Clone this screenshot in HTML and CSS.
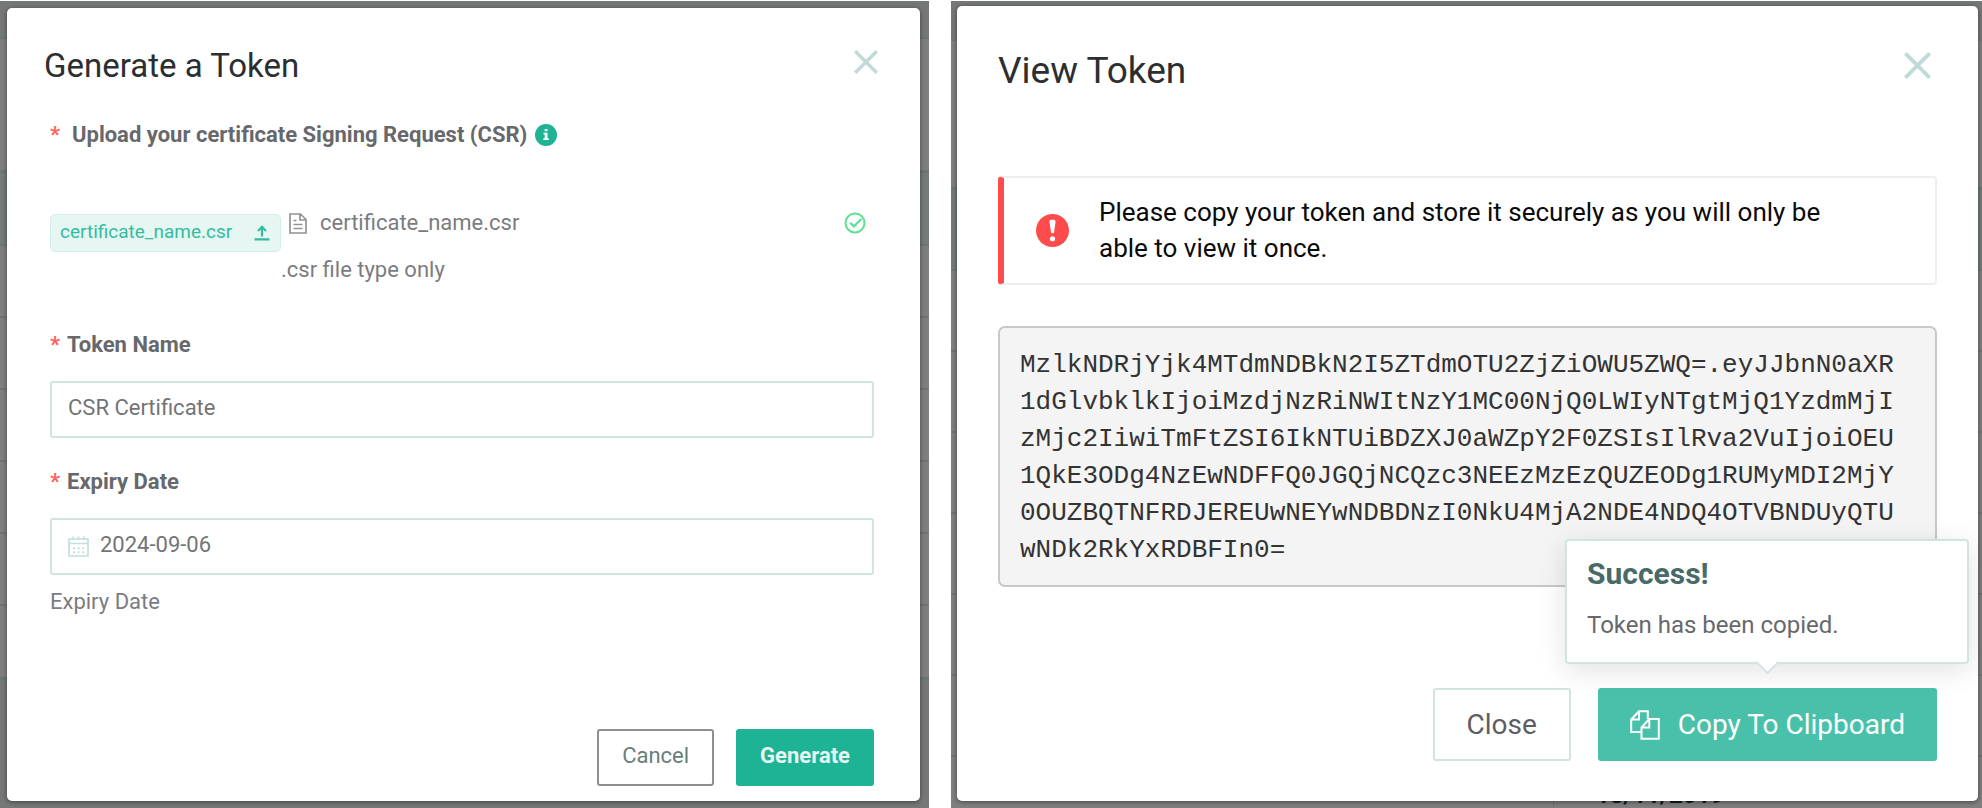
FILE: index.html
```html
<!DOCTYPE html>
<html lang="en">
<head>
<meta charset="utf-8">
<title>Generate a Token</title>
<link rel="stylesheet" href="styles.css">
</head>
<body>
<main class="screens">
  <section class="screen screen-generate">
    <div class="backdrop backdrop-generate" aria-hidden="true">
      <div class="row row-top"></div>
      <div class="row row-head"></div>
      <div class="row row-tint"></div>
      <div class="row"></div>
      <div class="row"></div>
      <div class="row"></div>
      <div class="row"></div>
      <div class="row"></div>
      <div class="row row-last"></div>
      <div class="row row-end"></div>
    </div>
    <form class="modal modal-generate" role="dialog" aria-labelledby="generate-title">
      <header class="modal-header">
        <h1 class="modal-title" id="generate-title">Generate a Token</h1>
        <button class="close-button" type="button" aria-label="Close dialog">
          <svg class="icon-close" viewBox="0 0 24 24"><path d="M1.2 1.2 22.8 22.8M22.8 1.2 1.2 22.8" fill="none" stroke="currentColor" stroke-width="3.4"/></svg>
        </button>
      </header>
      <div class="form">
        <p class="label label-upload"><span class="required">*</span><span>Upload your certificate Signing Request (CSR)</span>
          <svg class="icon-info" viewBox="0 0 22 22"><circle cx="11" cy="11" r="11" fill="#1db394"/><path d="M9.7 5h2.8v2.3H9.7zM8.5 8.8h4v5.4h1.3V16H8.3v-1.8h1.4v-3.6H8.5z" fill="#fff"/></svg>
        </p>
        <div class="upload">
          <button class="upload-button" type="button">
            <span>certificate_name.csr</span>
            <svg class="icon-upload" viewBox="0 0 16 16"><path d="M8 12V3M4 6.400 8 2.300l4 4.100M.5 14.800h15" fill="none" stroke="currentColor" stroke-width="2.200"/></svg>
          </button>
          <div class="upload-info">
            <div class="file">
              <svg class="icon-file" viewBox="0 0 18 21"><path d="M1 1h10.500L17 6.500V20H1zM11 1v6h6M4.500 11.500h9M4.500 15.500h9M4.500 7.500h3" fill="none" stroke="currentColor" stroke-width="1.700"/></svg>
              <span class="file-name">certificate_name.csr</span>
              <svg class="icon-check" viewBox="0 0 22 22"><circle cx="11" cy="11" r="9.500" fill="none" stroke="#5be094" stroke-width="2"/><path d="m6.200 10.800 3.600 3.600L17.400 7" fill="none" stroke="#5be094" stroke-width="2.200"/></svg>
            </div>
            <p class="hint">.csr file type only</p>
          </div>
        </div>
        <div class="field">
          <label class="label" for="token-name"><span class="required">*</span>Token Name</label>
          <div class="control"><input class="input" id="token-name" type="text" value="CSR Certificate"></div>
        </div>
        <div class="field">
          <label class="label" for="expiry-date"><span class="required">*</span>Expiry Date</label>
          <div class="control">
            <svg class="icon-calendar" viewBox="0 0 21 21"><path d="M1 3h19v17H1zM1 7.500h19M5 .5V4M10.500 .5V4M16 .5V4" fill="none" stroke="currentColor" stroke-width="1.700"/><path d="M5 12.200h11.500M5 16.200h11.500" fill="none" stroke="currentColor" stroke-width="2" stroke-dasharray="2 2.600"/></svg>
            <input class="input" id="expiry-date" type="text" value="2024-09-06">
          </div>
          <p class="hint hint-date">Expiry Date</p>
        </div>
      </div>
      <footer class="modal-footer">
        <button class="button button-cancel" type="button">Cancel</button>
        <button class="button button-generate" type="submit">Generate</button>
      </footer>
    </form>
  </section>

  <section class="screen screen-view">
    <div class="backdrop backdrop-view" aria-hidden="true">
      <div class="row row-top"></div>
      <div class="row row-head"></div>
      <div class="row row-tint"></div>
      <div class="row"></div>
      <div class="row"></div>
      <div class="row"></div>
      <div class="row"></div>
      <div class="row"></div>
      <div class="row"></div>
      <div class="row row-date"><span class="cell">18/11/2019</span></div>
    </div>
    <div class="modal modal-view" role="dialog" aria-labelledby="view-title">
      <header class="modal-header">
        <h1 class="modal-title" id="view-title">View Token</h1>
        <button class="close-button" type="button" aria-label="Close dialog">
          <svg class="icon-close" viewBox="0 0 24 24"><path d="M1.200 1.200 22.800 22.800M22.800 1.200 1.200 22.800" fill="none" stroke="currentColor" stroke-width="3.400"/></svg>
        </button>
      </header>
      <div class="alert" role="alert">
        <svg class="icon-alert" viewBox="0 0 32 32"><circle cx="16" cy="16" r="16" fill="#ff4b4b"/><path d="M13 7.500C13 5.700 14.300 5.500 16 5.500s3 .2 3 2l-1.500 10c-.2 1.700-2.800 1.700-3 0z" fill="#fff"/><circle cx="16" cy="24" r="2.500" fill="#fff"/></svg>
        <p class="alert-text">Please copy your token and store it securely as you will only be able to view it once.</p>
      </div>
      <div class="token">
        <code class="token-line">MzlkNDRjYjk4MTdmNDBkN2I5ZTdmOTU2ZjZiOWU5ZWQ=.eyJJbnN0aXR</code>
        <code class="token-line">1dGlvbklkIjoiMzdjNzRiNWItNzY1MC00NjQ0LWIyNTgtMjQ1YzdmMjI</code>
        <code class="token-line">zMjc2IiwiTmFtZSI6IkNTUiBDZXJ0aWZpY2F0ZSIsIlRva2VuIjoiOEU</code>
        <code class="token-line">1QkE3ODg4NzEwNDFFQ0JGQjNCQzc3NEEzMzEzQUZEODg1RUMyMDI2MjY</code>
        <code class="token-line">0OUZBQTNFRDJEREUwNEYwNDBDNzI0NkU4MjA2NDE4NDQ4OTVBNDUyQTU</code>
        <code class="token-line">wNDk2RkYxRDBFIn0=</code>
      </div>
      <footer class="modal-footer">
        <button class="button button-close" type="button">Close</button>
        <div class="copy">
          <button class="button button-copy" type="button">
            <svg class="icon-copy" viewBox="0 0 30 30"><path d="M11.500 22H1.200V9.500L9 1.200h8.800V9M9 1.200v8.300H1.200M11.500 28.800V17.500L19.300 9H28.800v19.800zM19.300 9v8.500h-7.800" fill="none" stroke="currentColor" stroke-width="2"/></svg>
            <span>Copy To Clipboard</span>
          </button>
          <div class="popover" role="status">
            <h2 class="popover-title">Success!</h2>
            <p class="popover-text">Token has been copied.</p>
          </div>
        </div>
      </footer>
    </div>
  </section>
</main>
</body>
</html>
```
FILE: styles.css
```css
* { box-sizing: border-box; }

body {
  margin: 0;
  background: #fff;
  font-family: Roboto, "Liberation Sans", sans-serif;
}

h1, h2, p { margin: 0; }

button, input { font: inherit; }

svg { display: block; flex: none; }

.screens {
  display: grid;
  grid-template-columns: minmax(0, 929fr) minmax(0, 1031fr);
  gap: 22px;
  min-height: 100vh;
  padding-top: 1px;
}

.screen {
  position: relative;
  display: flex;
}

.screen-generate { padding: 7px 9px 7px 7px; }
.screen-view { padding: 5px 4px 7px 6px; }

/* Dimmed table behind each dialog */
.backdrop {
  position: absolute;
  inset: 0;
  display: grid;
  overflow: hidden;
  background: #7f7f7f;
}

.backdrop-generate { grid-template-rows: 38px 134px 73px repeat(5, 72px) 74px 1fr; }
.backdrop-view { grid-template-rows: 40px 149px 81px repeat(6, 81px) 1fr; }

.row { border-bottom: 2px solid #6c7675; }
.row-top, .row-end { background: #767777; }
.row-head, .row-last { border-bottom-width: 3px; }
.row-tint { background: #737b7b; }
.row-end, .row-date { border-bottom: 0; }
.row-date { padding-left: 602px; }

.cell {
  display: block;
  padding-left: 42px;
  border-left: 1px solid #6c7675;
  color: #0d1c19;
  font-size: 24px;
  font-weight: 700;
  line-height: 76px;
}

.modal {
  position: relative;
  display: flex;
  flex: 1;
  flex-direction: column;
  min-width: 0;
  border-radius: 5px;
  background: #fff;
  box-shadow: 0 1px 5px rgba(0, 0, 0, .45);
}

.modal-generate { padding: 37px 46px 15px 37px; }
.modal-view { padding: 44px 41px 40px; }

.modal-header {
  display: flex;
  justify-content: space-between;
}

.modal-title {
  color: #2c2e31;
  font-weight: 400;
  line-height: 42px;
}

.modal-generate .modal-title { font-size: 33px; }
.modal-view .modal-title { font-size: 37px; }

.close-button {
  align-self: flex-start;
  padding: 0;
  border: 0;
  background: none;
  color: #bfdad7;
  cursor: pointer;
}

.modal-generate .close-button { margin: 5px -4px 0 0; }
.modal-view .close-button { margin: 2px 6px 0 0; }
.modal-generate .icon-close { width: 24px; height: 24px; }
.modal-view .icon-close { width: 27px; height: 27px; }

.form {
  margin-top: 34px;
  padding-left: 6px;
  color: #7b7c7f;
  font-size: 22px;
  line-height: 28px;
}

.label {
  display: flex;
  align-items: center;
  color: #67686c;
  font-weight: 700;
}

.required {
  margin-right: 7px;
  color: #ff6363;
}

.label-upload .required { margin-right: 12px; }
.icon-info { width: 22px; height: 22px; margin-left: 8px; }

.upload {
  display: flex;
  align-items: flex-start;
  margin-top: 62px;
}

.upload-button {
  display: flex;
  align-items: center;
  justify-content: space-between;
  width: 231px;
  height: 38px;
  margin-top: 3px;
  padding: 0 10px 2px 9px;
  border: 1px solid #d3efe8;
  border-radius: 5px;
  background: #e6f6f2;
  color: #35bc9f;
  font-size: 19px;
}

.icon-upload { width: 16px; height: 17px; }

.upload-info { flex: 1; }

.file {
  display: flex;
  align-items: center;
  height: 24px;
  padding: 0 8px;
}

.icon-file { width: 18px; height: 21px; color: #929397; }
.file-name { flex: 1; margin-left: 13px; }
.icon-check { width: 22px; height: 22px; }
.upload-info .hint { margin-top: 21px; }

.upload + .field { margin-top: 47px; }
.field + .field { margin-top: 30px; }

.control {
  display: flex;
  align-items: center;
  height: 57px;
  margin-top: 22px;
  padding: 0 16px;
  border: 2px solid #d0e5e2;
  border-radius: 3px;
}

.icon-calendar { width: 21px; height: 21px; margin-right: 11px; color: #c4dfdc; }

.input {
  flex: 1;
  min-width: 0;
  padding: 0 0 4px;
  border: 0;
  outline: 0;
  background: none;
  color: #737477;
}

.hint-date { margin-top: 13px; }

.modal-footer {
  display: flex;
  justify-content: flex-end;
  margin-top: auto;
}

.modal-generate .modal-footer { gap: 22px; }
.modal-view .modal-footer { gap: 27px; }

.button {
  display: flex;
  align-items: center;
  justify-content: center;
  border-radius: 3px;
  white-space: nowrap;
  cursor: pointer;
}

.button-cancel, .button-generate { height: 57px; padding: 0 24px 4px; font-size: 22px; }
.button-cancel { padding: 0 23px 4px; border: 2px solid #8f8f8f; background: #fff; color: #687e7b; }
.button-generate { border: 0; background: #1db394; color: #e6f6f2; font-weight: 700; }

.alert {
  display: flex;
  align-items: center;
  min-height: 109px;
  margin-top: 84px;
  padding: 0 80px 0 32px;
  border: 2px solid #eee;
  border-left: 6px solid #ff4b4b;
  border-radius: 4px;
}

.icon-alert { width: 33px; height: 33px; }

.alert-text {
  margin-left: 30px;
  padding-bottom: 2px;
  color: #0a0a0a;
  font-size: 26px;
  line-height: 36px;
}

.token {
  margin-top: 41px;
  padding: 19px 20px 16px;
  border: 2px solid #c8c8c8;
  border-radius: 7px;
  background: #f4f4f4;
  color: #333;
  font-size: 26px;
  line-height: 37px;
}

.token-line {
  display: block;
  width: max-content;
  font-family: "Liberation Mono", monospace;
  font-size: 26px;
}

.button-close, .button-copy { height: 73px; font-size: 28px; }
.button-close { padding: 0 32px; border: 2px solid #d0e5e2; background: #fff; color: #5d5e63; }
.button-copy { gap: 18px; padding: 0 32px; border: 0; background: #49c1aa; color: #fff; }
.icon-copy { width: 30px; height: 30px; }

.copy { position: relative; }

.popover {
  position: absolute;
  right: -32px;
  bottom: 97px;
  width: 404px;
  padding: 15px 20px 20px;
  border: 2px solid #d0e5e2;
  border-radius: 4px;
  background: #fff;
  box-shadow: 0 6px 28px rgba(0, 0, 0, .12);
}

.popover::after {
  position: absolute;
  bottom: -9px;
  left: 50%;
  width: 15px;
  height: 15px;
  margin-left: -8px;
  border: solid #d0e5e2;
  border-width: 0 2px 2px 0;
  background: #fff;
  content: "";
  transform: rotate(45deg);
}

.popover-title {
  color: #486a68;
  font-size: 30px;
  font-weight: 700;
  line-height: 36px;
}

.popover-text {
  margin-top: 16px;
  color: #67686c;
  font-size: 24px;
  line-height: 34px;
}
```
